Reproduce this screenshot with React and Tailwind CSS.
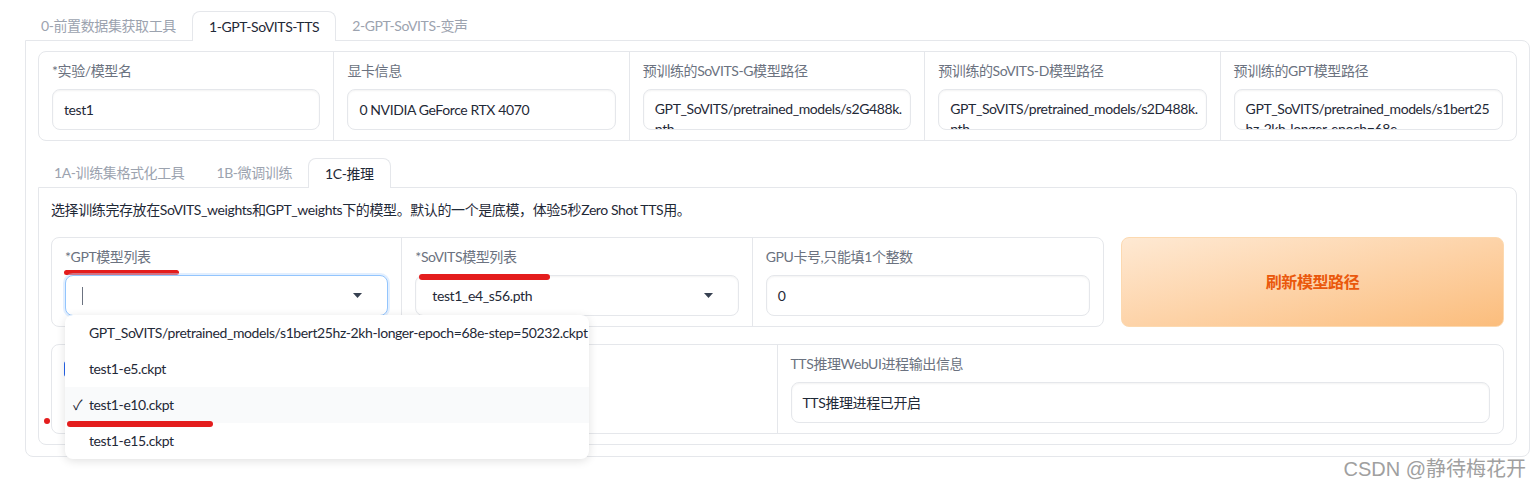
import React from "react";

const inputBox =
  "h-[41px] rounded-lg border border-[#e5e7eb] bg-white px-[11px] text-sm text-[#1f2937] shadow-[inset_0_1px_2px_rgba(0,0,0,0.05)]";

const Caret = () => (
  <svg width="9" height="5" viewBox="0 0 9 5" className="shrink-0">
    <path d="M0 0h9L4.5 5z" fill="#374151" />
  </svg>
);

const Block = ({ label, children, className = "" }) => (
  <div className={`relative px-[13px] pt-[9px] pb-[10px] ${className}`}>
    <div className="text-sm leading-5 text-[#6b7280] whitespace-nowrap">{label}</div>
    <div className="mt-[8px]">{children}</div>
  </div>
);

const TwoLine = ({ a, b }) => (
  <div className={`${inputBox} overflow-hidden pt-[9px] leading-5`}>
    <div className="whitespace-nowrap">{a}</div>
    <div className="whitespace-nowrap">{b}</div>
  </div>
);

const Tab = ({ children, active }) =>
  active ? (
    <div className="relative z-10 -mb-px rounded-t-lg border border-b-0 border-[#e5e7eb] bg-white px-4 text-sm leading-[29px] text-[#1f2937]">
      {children}
    </div>
  ) : (
    <div className="px-4 text-sm leading-[29px] text-[#9ca3af]">{children}</div>
  );

const options = [
  "GPT_SoVITS/pretrained_models/s1bert25hz-2kh-longer-epoch=68e-step=50232.ckpt",
  "test1-e5.ckpt",
  "test1-e10.ckpt",
  "test1-e15.ckpt",
];

export default function App() {
  return (
    <div className="relative min-h-screen bg-white font-['Lato','Noto_Sans_CJK_SC',sans-serif]">
      <div className="pl-[25px] pr-[10px] pt-[11px] tracking-[-0.4px]">
        {/* top tabs */}
        <div className="flex items-end">
          <Tab>0-前置数据集获取工具</Tab>
          <Tab active>1-GPT-SoVITS-TTS</Tab>
          <Tab>2-GPT-SoVITS-变声</Tab>
        </div>

        <div className="rounded-b-lg rounded-tr-lg border border-[#e5e7eb] px-[12px] pt-[10px] pb-[11px]">
          {/* row 1 */}
          <div className="grid grid-cols-5 divide-x divide-[#e5e7eb] rounded-lg border border-[#e5e7eb]">
            <Block label="*实验/模型名">
              <div className={`${inputBox} flex items-center`}>test1</div>
            </Block>
            <Block label="显卡信息">
              <div className={`${inputBox} flex items-center`}>0 NVIDIA GeForce RTX 4070</div>
            </Block>
            <Block label="预训练的SoVITS-G模型路径">
              <TwoLine a="GPT_SoVITS/pretrained_models/s2G488k." b="pth" />
            </Block>
            <Block label="预训练的SoVITS-D模型路径">
              <TwoLine a="GPT_SoVITS/pretrained_models/s2D488k." b="pth" />
            </Block>
            <Block label="预训练的GPT模型路径">
              <TwoLine a="GPT_SoVITS/pretrained_models/s1bert25" b="hz-2kh-longer-epoch=68e" />
            </Block>
          </div>

          {/* sub tabs */}
          <div className="mt-[17px] flex items-end">
            <Tab>1A-训练集格式化工具</Tab>
            <Tab>1B-微调训练</Tab>
            <Tab active>1C-推理</Tab>
          </div>

          <div className="rounded-b-lg rounded-tr-lg border border-[#e5e7eb] px-[12px] pt-[12px] pb-[10px]">
            <p className="text-sm leading-5 text-[#1f2937]">
              选择训练完存放在SoVITS_weights和GPT_weights下的模型。默认的一个是底模，体验5秒Zero Shot TTS用。
            </p>

            {/* row 2 */}
            <div className="mt-[17px] flex gap-[17px]">
              <div className="relative z-20 grid flex-1 grid-cols-3 divide-x divide-[#e5e7eb] rounded-lg border border-[#e5e7eb]">
                <Block label="*GPT模型列表">
                  <span className="absolute left-[12px] top-[32px] h-[5px] w-[115px] rounded-full bg-[#e41d1d]" />
                  <div className="relative">
                    <div className="flex h-[41px] items-center justify-between rounded-lg border border-[#93c5fd] bg-white pl-[16px] pr-[25px] shadow-[0_0_0_2px_rgba(191,219,254,0.45)]">
                      <span className="h-[18px] w-px bg-[#6b7280]" />
                      <Caret />
                    </div>
                    {/* dropdown */}
                    <div className="absolute left-0 top-[40px] z-30 w-[524px] rounded-lg bg-white shadow-[0_2px_10px_rgba(0,0,0,0.12)]">
                      {options.map((o, i) => (
                        <div
                          key={o}
                          className={`relative flex h-9 items-center whitespace-nowrap pl-[24px] text-sm text-[#1f2937] ${i === 2 ? "bg-[#f9fafb]" : ""}`}
                        >
                          {i === 2 && <span className="absolute left-[8px] text-sm">✓</span>}
                          {o}
                        </div>
                      ))}
                      <span className="absolute left-[2px] top-[106px] h-[6px] w-[146px] rounded-full bg-[#e41d1d]" />
                      <span className="absolute left-[-21px] top-[103px] h-[6px] w-[6px] rounded-full bg-[#e41d1d]" />
                    </div>
                  </div>
                </Block>
                <Block label="*SoVITS模型列表">
                  <span className="absolute left-[17px] top-[36px] z-10 h-[6px] w-[131px] rounded-full bg-[#e41d1d]" />
                  <div className={`${inputBox} flex items-center justify-between pl-[16px] pr-[25px]`}>
                    <span>test1_e4_s56.pth</span>
                    <Caret />
                  </div>
                </Block>
                <Block label="GPU卡号,只能填1个整数">
                  <div className={`${inputBox} flex items-center`}>0</div>
                </Block>
              </div>
              <button className="w-[383px] rounded-lg border border-[#fcd9b0] bg-gradient-to-br from-[#fee9d3] to-[#fbbd7c] text-base font-semibold text-[#ea580c]">
                刷新模型路径
              </button>
            </div>

            {/* row 3 */}
            <div className="mt-[17px] grid grid-cols-2 divide-x divide-[#e5e7eb] rounded-lg border border-[#e5e7eb]">
              <div className="px-[12px] pt-[14px]">
                <label className="flex items-center gap-2 text-sm text-[#1f2937]">
                  <span className="h-[16px] w-[16px] rounded-[3px] border-2 border-[#2563eb] bg-[#2563eb]" />
                  开启TTS推理WebUI
                </label>
              </div>
              <Block label="TTS推理WebUI进程输出信息">
                <div className={`${inputBox} flex items-center`}>TTS推理进程已开启</div>
              </Block>
            </div>
          </div>
        </div>
      </div>

      <div className="pr-[14px] text-right text-[20px] leading-6 text-[#a0a0a0] font-['Liberation_Sans','Noto_Sans_CJK_SC',sans-serif]">
        CSDN @静待梅花开
      </div>
    </div>
  );
}
